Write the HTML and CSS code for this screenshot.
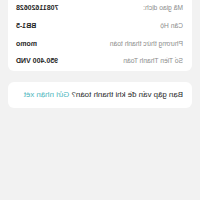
FILE: index.html
```html
<!DOCTYPE html>
<html lang="vi">
<head>
<meta charset="utf-8">
<link rel="stylesheet" href="styles.css">
</head>
<body>
<div class="page">
  <div class="card info">
    <div class="row"><span class="label">Mã giao dịch:</span><span class="value">70811620628</span></div>
    <div class="row"><span class="label">Căn Hộ</span><span class="value">BB1-5</span></div>
    <div class="row"><span class="label">Phương thức thanh toán</span><span class="value">momo</span></div>
    <div class="row"><span class="label">Số Tiền Thanh Toán</span><span class="value">950.400 VND</span></div>
  </div>
  <div class="card feedback">
    <p class="ask">Bạn gặp vấn đề khi thanh toán? <span class="link">Gửi nhận xét</span></p>
  </div>
</div>
</body>
</html>
```
FILE: styles.css
```css
html, body {
  margin: 0;
  padding: 0;
  background: #f2f2f2;
}
.page {
  width: 200px;
  height: 200px;
  box-sizing: border-box;
  padding: 0 8px;
  background: #f2f2f2;
  transform: scaleX(-1);
  font-family: "Liberation Sans", Arial, sans-serif;
  overflow: hidden;
}
.card {
  background: #ffffff;
  border-radius: 6px;
}
.info {
  margin-top: -1px;
  border-radius: 0 0 6px 6px;
  padding: 0 8px 1px 9px;
}
.row {
  height: 17.67px;
  display: flex;
  align-items: center;
  justify-content: space-between;
}
.label {
  font-size: 6.7px;
  color: #8c8c8c;
}
.value {
  font-size: 7px;
  font-weight: 600;
  color: #1f1f1f;
}
.feedback {
  margin-top: 11px;
  height: 26px;
  padding: 0 9px;
  display: flex;
  align-items: center;
}
.ask {
  margin: 0;
  font-size: 7.9px;
  color: #2a2a2a;
  white-space: nowrap;
}
.link {
  color: #4db6bd;
}
```
